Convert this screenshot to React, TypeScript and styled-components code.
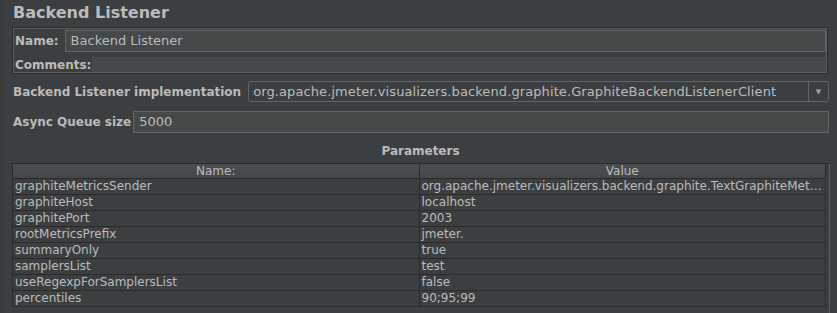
import { createGlobalStyle } from 'styled-components'
import styled from 'styled-components'

const GlobalStyle = createGlobalStyle`
  html, body {
    margin: 0;
    padding: 0;
    background-color: #3c3f41;
    overflow: hidden;
  }
  body {
    font-family: "DejaVu Sans", "Liberation Sans", sans-serif;
    color: #bbbbbb;
  }
`

const Page = styled.div`
  width: 837px;
  height: 313px;
  box-sizing: border-box;
  border-left: 4px solid #393b3d;
  display: flex;
  flex-direction: column;
  overflow: hidden;
`

const Title = styled.h1`
  margin: 0;
  height: 27px;
  padding: 3px 0 0 9px;
  box-sizing: border-box;
  font-size: 16px;
  font-weight: bold;
  color: #bbbbbb;
  line-height: 19px;
`

const GroupBox = styled.div`
  margin: 0 9px 0 8px;
  border: 1px solid #2b2b2b;
  box-shadow: inset 0 0 0 1px #5b5e60;
  padding: 2px 1px 1px 2px;
  display: flex;
  flex-direction: column;
`

const FieldRow = styled.div<{ $gap?: number }>`
  display: flex;
  align-items: center;
  gap: ${p => p.$gap ?? 6}px;
`

const Label = styled.span`
  font-size: 12px;
  font-weight: bold;
  color: #bbbbbb;
  white-space: nowrap;
`

const TextField = styled.div`
  flex: 1;
  height: 22px;
  box-sizing: border-box;
  background-color: #45494a;
  border: 1px solid #646464;
  font-size: 13px;
  line-height: 20px;
  padding-left: 5px;
  color: #bbbbbb;
  white-space: nowrap;
  overflow: hidden;
`

const CommentArea = styled.div`
  flex: 1;
  height: 15px;
  background-color: #45494a;
`

const CommentRow = styled(FieldRow)`
  margin-top: 5px;
`

const FormRow = styled.div<{ $top: number; $gap: number }>`
  display: flex;
  align-items: center;
  gap: ${p => p.$gap}px;
  margin: ${p => p.$top}px 8px 0 9px;
`

const Combo = styled.div`
  flex: 1;
  display: flex;
  height: 21px;
  box-sizing: border-box;
  border: 1px solid #646464;
  border-radius: 3px;
  overflow: hidden;
`

const ComboText = styled.div`
  flex: 1;
  font-size: 13px;
  letter-spacing: 0.1px;
  line-height: 19px;
  padding-left: 4px;
  white-space: nowrap;
  overflow: hidden;
  color: #bbbbbb;
`

const ComboArrow = styled.div`
  width: 19px;
  border-left: 1px solid #646464;
  display: flex;
  align-items: center;
  justify-content: center;
  color: #a0a0a0;
  font-size: 7px;
`

const SectionTitle = styled.div`
  margin-top: 9px;
  height: 21px;
  text-align: center;
  font-size: 12px;
  font-weight: bold;
  line-height: 18px;
  color: #bbbbbb;
`

const TableWrap = styled.div`
  margin-left: 8px;
  width: 817px;
  flex: 1;
  border-right: 1px solid #5b5e60;
  border-top: 1px solid #2b2b2b;
`

const Table = styled.table`
  width: 814px;
  border-collapse: collapse;
  table-layout: fixed;
  font-size: 12px;
  color: #bbbbbb;
`

const HeadCell = styled.th`
  height: 14px;
  padding: 0;
  font-weight: normal;
  text-align: center;
  line-height: 13px;
  background: linear-gradient(#4a4e50, #44484a);
  border-left: 1px solid #2b2b2b;
  border-right: 1px solid #2b2b2b;
  border-bottom: 1px solid #2b2b2b;
  white-space: nowrap;
`

const Cell = styled.td`
  height: 15px;
  padding: 0 0 0 2px;
  line-height: 15px;
  border: 1px solid #2b2b2b;
  border-top: none;
  white-space: nowrap;
  overflow: hidden;
  text-overflow: ellipsis;
`

const params: [string, string][] = [
  ['graphiteMetricsSender', 'org.apache.jmeter.visualizers.backend.graphite.TextGraphiteMetricsSender'],
  ['graphiteHost', 'localhost'],
  ['graphitePort', '2003'],
  ['rootMetricsPrefix', 'jmeter.'],
  ['summaryOnly', 'true'],
  ['samplersList', 'test'],
  ['useRegexpForSamplersList', 'false'],
  ['percentiles', '90;95;99'],
]

export default function App() {
  return (
    <>
      <GlobalStyle />
      <Page>
        <Title>Backend Listener</Title>
        <GroupBox>
          <FieldRow>
            <Label>Name:</Label>
            <TextField>Backend Listener</TextField>
          </FieldRow>
          <CommentRow $gap={1}>
            <Label>Comments:</Label>
            <CommentArea />
          </CommentRow>
        </GroupBox>
        <FormRow $top={7} $gap={7}>
          <Label>Backend Listener implementation</Label>
          <Combo>
            <ComboText>org.apache.jmeter.visualizers.backend.graphite.GraphiteBackendListenerClient</ComboText>
            <ComboArrow>▼</ComboArrow>
          </Combo>
        </FormRow>
        <FormRow $top={9} $gap={2}>
          <Label>Async Queue size</Label>
          <TextField>5000</TextField>
        </FormRow>
        <SectionTitle>Parameters</SectionTitle>
        <TableWrap>
          <Table>
            <thead>
              <tr>
                <HeadCell>Name:</HeadCell>
                <HeadCell>Value</HeadCell>
              </tr>
            </thead>
            <tbody>
              {params.map(([k, v]) => (
                <tr key={k}>
                  <Cell>{k}</Cell>
                  <Cell>{v}</Cell>
                </tr>
              ))}
            </tbody>
          </Table>
        </TableWrap>
      </Page>
    </>
  )
}
